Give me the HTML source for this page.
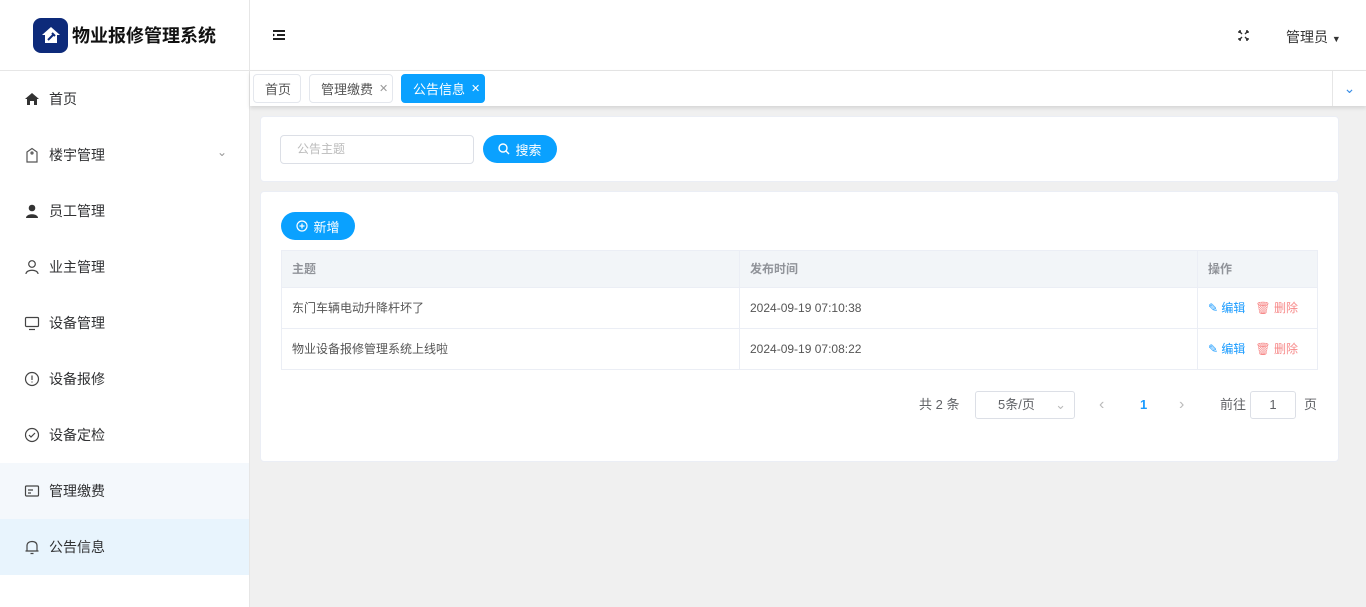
<!DOCTYPE html>
<html><head><meta charset="utf-8"><style>
*{box-sizing:border-box;margin:0;padding:0}
body{width:1366px;height:607px;overflow:hidden;background:#f0f0f0;font-family:"Liberation Sans","Noto Sans CJK SC",sans-serif;font-size:13px;color:#333;position:relative}
.side{position:absolute;left:0;top:0;width:250px;height:607px;background:#fff;border-right:1px solid #e6e6e6}
.logo{height:71px;border-bottom:1px solid #e6e6e6;display:flex;align-items:center;padding-left:33px}
.logo .ic{width:35px;height:35px;border-radius:8px;background:#0d2a7a;display:flex;align-items:center;justify-content:center}
.logo span{font-size:18px;font-weight:bold;color:#111;margin-left:4px;white-space:nowrap}
.mi{height:56px;display:flex;align-items:center;padding-left:24px;font-size:14px;color:#303133;position:relative}
.mi svg{width:16px;height:16px;margin-right:9px}
.top{position:absolute;left:250px;top:0;right:0;height:71px;background:#fff;border-bottom:1px solid #e6e6e6}
.tabs{position:absolute;left:250px;top:71px;right:0;height:35px;background:#fff;box-shadow:0 2px 4px rgba(0,0,0,.12)}
.tab{position:absolute;top:3px;height:29px;border:1px solid #e4e7ed;border-radius:4px;font-size:13px;color:#555;display:flex;align-items:center;padding:0 11px;white-space:nowrap}
.card{position:absolute;left:260px;width:1079px;background:#fff;border:1px solid #ebeef5;border-radius:4px}
.btn{position:absolute;background:#0aa1ff;color:#fff;border-radius:14px;height:28px;display:flex;align-items:center;justify-content:center;font-size:13px}
table{position:absolute;left:20px;top:58px;width:1037px;border-collapse:collapse;font-size:12px}
td,th{border:1px solid #ebeef5;padding-left:10px;text-align:left;line-height:14px}
th{height:37px;background:#f2f5f8;color:#909399;font-weight:bold}
td{height:41px;color:#555}
.pg{position:absolute;top:199px;height:28px;line-height:28px;color:#606266;font-size:13px}
</style></head><body>
<div class="side">
 <div class="logo"><div class="ic"><svg width="22" height="22" viewBox="0 0 22 22"><path d="M11 3 L20 11 H17 V19 H5 V11 H2 Z" fill="#fff"/><path d="M8 16 L13 11 M12 9 l3 3" stroke="#0d2a7a" stroke-width="2"/></svg></div><span>物业报修管理系统</span></div>
 <div class="mi"><svg viewBox="0 0 16 16"><path d="M8 2 L15 8 H13 V14 H10 V10 H6 V14 H3 V8 H1 Z" fill="#333"/></svg>首页</div>
 <div class="mi"><svg viewBox="0 0 16 16" fill="none" stroke="#555" stroke-width="1.2"><path d="M3 5 L8 1.5 L13 5 V15 H3 Z"/><circle cx="8" cy="6" r="1"/></svg>楼宇管理<span style="position:absolute;right:22px;top:18px;color:#999;font-size:12px">&#8964;</span></div>
 <div class="mi"><svg viewBox="0 0 16 16"><circle cx="8" cy="5" r="3.3" fill="#333"/><path d="M2 15 C2 10 14 10 14 15 Z" fill="#333"/></svg>员工管理</div>
 <div class="mi"><svg viewBox="0 0 16 16" fill="none" stroke="#444" stroke-width="1.2"><circle cx="8" cy="5" r="3.3"/><path d="M2 15 C2 10 14 10 14 15"/></svg>业主管理</div>
 <div class="mi"><svg viewBox="0 0 16 16" fill="none" stroke="#444" stroke-width="1.2"><rect x="1.5" y="2.5" width="13" height="9" rx="1"/><path d="M5 14.5 H11"/></svg>设备管理</div>
 <div class="mi"><svg viewBox="0 0 16 16" fill="none" stroke="#444" stroke-width="1.2"><circle cx="8" cy="8" r="6.5"/><path d="M8 4.5 V9 M8 10.5 V11.5"/></svg>设备报修</div>
 <div class="mi"><svg viewBox="0 0 16 16" fill="none" stroke="#444" stroke-width="1.2"><circle cx="8" cy="8" r="6.5"/><path d="M5 8 L7 10 L11 6"/></svg>设备定检</div>
 <div class="mi" style="background:#f4f8fc"><svg viewBox="0 0 16 16" fill="none" stroke="#444" stroke-width="1.2"><rect x="1.5" y="3" width="13" height="10" rx="1"/><path d="M4 7 H9 M4 10 H7"/></svg>管理缴费</div>
 <div class="mi" style="background:#e8f4fd"><svg viewBox="0 0 16 16" fill="none" stroke="#444" stroke-width="1.2"><path d="M3 12 V7 C3 4 5 2.5 8 2.5 C11 2.5 13 4 13 7 V12 Z M1.5 12 H14.5 M6.5 14.5 H9.5"/></svg>公告信息</div>
</div>
<div class="top">
 <svg style="position:absolute;left:23px;top:30px" width="12" height="10" viewBox="0 0 12 10"><path d="M0 1H12M4 5H12M0 9H12" stroke="#000" stroke-width="1.8"/><path d="M0 3.5 L2 5 L0 6.5Z" fill="#000"/></svg>
 <svg style="position:absolute;left:988px;top:30px" width="11" height="11" viewBox="0 0 11 11" stroke="#333" stroke-width="1.4" fill="none"><path d="M1 1L4 4M10 1L7 4M1 10L4 7M10 10L7 7M1 1H3M1 1V3M10 1H8M10 1V3M1 10H3M1 10V8M10 10H8M10 10V8"/></svg>
 <div style="position:absolute;left:1036px;top:27px;font-size:14px;color:#333">管理员 <span style="font-size:9px">▼</span></div>
</div>
<div class="tabs">
 <div class="tab" style="left:3px;width:48px">首页</div>
 <div class="tab" style="left:59px;width:84px">管理缴费<span style="margin-left:6px;color:#999;font-size:11px">✕</span></div>
 <div class="tab" style="left:151px;width:84px;background:#0aa1ff;border-color:#0aa1ff;color:#fff">公告信息<span style="margin-left:6px;font-size:11px">✕</span></div>
 <div style="position:absolute;right:0;top:0;width:34px;height:35px;border-left:1px solid #e6e6e6;color:#3a8ee6;text-align:center;line-height:35px;font-size:14px">&#8964;</div>
</div>
<div class="card" style="top:116px;height:66px">
 <div style="position:absolute;left:19px;top:18px;width:194px;height:29px;border:1px solid #dcdfe6;border-radius:4px;color:#bbb;font-size:12px;padding-left:16px;line-height:27px">公告主题</div>
 <div class="btn" style="left:222px;top:18px;width:74px"><svg width="12" height="12" viewBox="0 0 12 12" fill="none" stroke="#fff" stroke-width="1.4" style="margin-right:5px"><circle cx="5" cy="5" r="4"/><path d="M8 8L11 11"/></svg>搜索</div>
</div>
<div class="card" style="top:191px;height:271px">
 <div class="btn" style="left:20px;top:20px;width:74px"><svg width="12" height="12" viewBox="0 0 12 12" fill="none" stroke="#fff" stroke-width="1.2" style="margin-right:5px"><circle cx="6" cy="6" r="5"/><path d="M6 3.5V8.5M3.5 6H8.5"/></svg>新增</div>
 <table>
  <tr><th style="width:458px">主题</th><th style="width:458px">发布时间</th><th>操作</th></tr>
  <tr><td>东门车辆电动升降杆坏了</td><td>2024-09-19 07:10:38</td><td><span style="color:#1a9bff">✎ 编辑</span>&nbsp;&nbsp;&nbsp;<span style="color:#f78989">🗑 删除</span></td></tr>
  <tr><td>物业设备报修管理系统上线啦</td><td>2024-09-19 07:08:22</td><td><span style="color:#1a9bff">✎ 编辑</span>&nbsp;&nbsp;&nbsp;<span style="color:#f78989">🗑 删除</span></td></tr>
 </table>
 <div class="pg" style="left:658px">共 2 条</div>
 <div class="pg" style="left:714px;width:100px;border:1px solid #dcdfe6;border-radius:3px;padding-left:22px;line-height:26px">5条/页<span style="position:absolute;right:8px;color:#bbb">&#8964;</span></div>
 <div class="pg" style="left:838px;color:#bbb;font-size:16px">‹</div>
 <div class="pg" style="left:879px;color:#1a9bff;font-weight:bold">1</div>
 <div class="pg" style="left:918px;color:#bbb;font-size:16px">›</div>
 <div class="pg" style="left:959px">前往</div>
 <div class="pg" style="left:989px;width:46px;border:1px solid #dcdfe6;border-radius:3px;text-align:center;line-height:26px">1</div>
 <div class="pg" style="left:1043px">页</div>
</div>
</body></html>
